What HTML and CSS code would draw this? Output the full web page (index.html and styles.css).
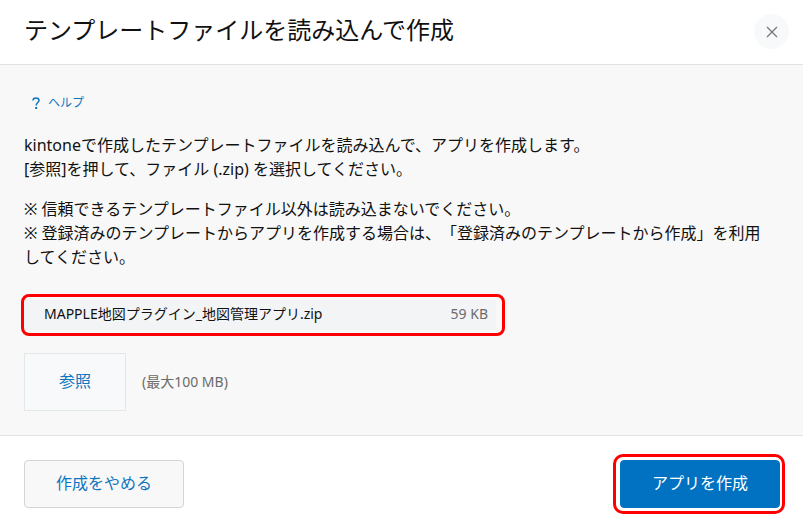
FILE: index.html
```html
<!DOCTYPE html>
<html lang="ja">
<head>
    <meta charset="UTF-8">
    <meta name="viewport" content="width=device-width, initial-scale=1.0">
    <title>テンプレートファイルを読み込んで作成</title>
    <link rel="stylesheet" href="styles.css">
</head>
<body>
    <form class="dialog">
        <header class="dialog-header">
            <h1 class="dialog-title">テンプレートファイルを読み込んで作成</h1>
            <button type="button" class="close-button" aria-label="閉じる">
                <svg width="12" height="12" viewBox="0 0 12 12" aria-hidden="true">
                    <path d="M1 1L11 11M11 1L1 11" fill="none" stroke="#777" stroke-width="1.3"/>
                </svg>
            </button>
        </header>
        <main class="dialog-body">
            <a class="help-link" href="#">
                <svg width="8" height="12" viewBox="0 0 8 12" aria-hidden="true">
                    <path d="M1 3.6C1 1.9 2.2 1 4 1S7 1.9 7 3.5C7 5.6 4.2 5.6 4.2 8.4" fill="none" stroke="#0e76bf" stroke-width="1.5"/>
                    <rect x="3.2" y="10" width="2" height="2" fill="#0e76bf"/>
                </svg>
                <span>ヘルプ</span>
            </a>
            <p class="message">kintoneで作成したテンプレートファイルを読み込んで、アプリを作成します。<br>[参照]を押して、ファイル (.zip) を選択してください。</p>
            <p class="message">※ 信頼できるテンプレートファイル以外は読み込まないでください。<br>※ 登録済みのテンプレートからアプリを作成する場合は、「登録済みのテンプレートから作成」を利用してください。</p>
            <div class="file-item highlight">
                <span class="file-name">MAPPLE地図プラグイン_地図管理アプリ.zip</span>
                <span class="file-size">59 KB</span>
            </div>
            <div class="file-select">
                <button type="button" class="browse-button">参照</button>
                <span class="file-limit">(最大100 MB)</span>
            </div>
        </main>
        <footer class="dialog-footer">
            <button type="button" class="button">作成をやめる</button>
            <div class="highlight">
                <button type="submit" class="button button-primary">アプリを作成</button>
            </div>
        </footer>
    </form>
</body>
</html>
```

FILE: styles.css
```css
* {
    box-sizing: border-box;
}
body {
    margin: 0;
    background-color: #fff;
    color: #111;
    font-family: "Noto Sans", "Noto Sans CJK JP", sans-serif;
    font-size: 16px;
    line-height: 24px;
    text-spacing-trim: space-all;
}
button {
    padding: 0;
    font: inherit;
    cursor: pointer;
}
.dialog-header {
    display: flex;
    justify-content: space-between;
    align-items: flex-start;
    padding: 14px 14px 15px 24px;
    border-bottom: 1px solid #e3e3e3;
}
.dialog-title {
    margin: 0;
    font-size: 24px;
    font-weight: 400;
    line-height: 32px;
}
.close-button {
    display: flex;
    justify-content: center;
    align-items: center;
    width: 35px;
    height: 35px;
    border: none;
    border-radius: 50%;
    background-color: #f7f9fa;
}
.dialog-body {
    padding: 30px 32px 24px 24px;
    border-bottom: 1px solid #e3e3e3;
    background-color: #f8f8f8;
}
.help-link {
    display: flex;
    align-items: center;
    gap: 8px;
    width: fit-content;
    margin: 0 8px 22px;
    color: #0e76bf;
    font-size: 12px;
    line-height: 16px;
    text-decoration: none;
}
.message {
    margin: 0 0 16px;
}
/* Red frame drawn around the important parts */
.highlight {
    position: relative;
}
.highlight::after {
    content: "";
    position: absolute;
    inset: -6px -5px -6px -7px;
    border: 3px solid #f00;
    border-radius: 10px;
    pointer-events: none;
}
.file-item {
    display: flex;
    justify-content: space-between;
    align-items: center;
    max-width: 472px;
    margin: 31px 0 23px;
    padding: 2px 8px 4px 20px;
    background-color: #f3f4f6;
    font-size: 14px;
}
.file-item::after {
    inset: -6px -9px -6px -3px;
    border-radius: 8px;
}
.file-size, .file-limit {
    color: #6b6b6b;
    font-size: 14px;
}
.file-select {
    display: flex;
    align-items: center;
    gap: 16px;
}
.browse-button {
    width: 102px;
    height: 58px;
    padding-bottom: 2px;
    border: 1px solid #e3e7e8;
    background-color: #f7f9fa;
    color: #0e76bf;
}
.dialog-footer {
    display: flex;
    justify-content: space-between;
    padding: 24px 23px 24px 24px;
}
.button {
    display: block;
    width: 160px;
    height: 48px;
    padding-bottom: 2px;
    border: 1px solid #d4d4d4;
    border-radius: 4px;
    background-color: #f8f8f8;
    color: #0e76bf;
}
.button-primary {
    border-color: #0072c1;
    background-color: #0072c1;
    color: #fff;
}
```
